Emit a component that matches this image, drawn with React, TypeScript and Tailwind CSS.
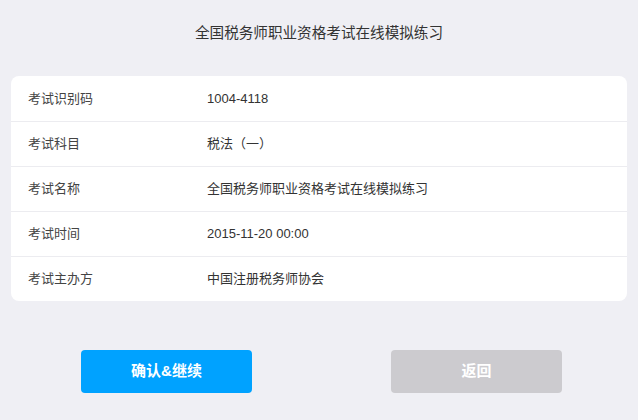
export default function App() {
  const rows = [
    { label: "考试识别码", value: "1004-4118" },
    { label: "考试科目", value: "税法（一）" },
    { label: "考试名称", value: "全国税务师职业资格考试在线模拟练习" },
    { label: "考试时间", value: "2015-11-20 00:00" },
    { label: "考试主办方", value: "中国注册税务师协会" },
  ]

  return (
    <div
      className="w-[638px] h-[420px] bg-[#efeff4] text-[#333]"
      style={{ fontFamily: '"Liberation Sans", "Noto Sans CJK SC", sans-serif' }}
    >
      {/* Header */}
      <div className="h-[76px] flex items-start justify-center pt-[23px]">
        <h1 className="text-[14.6px] leading-[20px]">全国税务师职业资格考试在线模拟练习</h1>
      </div>

      {/* Info card */}
      <div className="mx-[11px] bg-white rounded-[8px] overflow-hidden">
        {rows.map((row, i) => (
          <div
            key={i}
            className={`flex items-center h-[45px] text-[13px] ${i > 0 ? "border-t border-[#ececf0]" : ""}`}
          >
            <span className="w-[196px] pl-[17px] text-[#444]">{row.label}</span>
            <span>{row.value}</span>
          </div>
        ))}
      </div>

      {/* Actions */}
      <div className="flex justify-between pl-[81px] pr-[76px] mt-[49px]">
        <button className="w-[171px] h-[43px] rounded-[4px] bg-[#00a2ff] text-white text-[15px] font-bold">
          确认&amp;继续
        </button>
        <button className="w-[171px] h-[43px] rounded-[4px] bg-[#cccbcf] text-white text-[15px] font-bold">
          返回
        </button>
      </div>
    </div>
  )
}
